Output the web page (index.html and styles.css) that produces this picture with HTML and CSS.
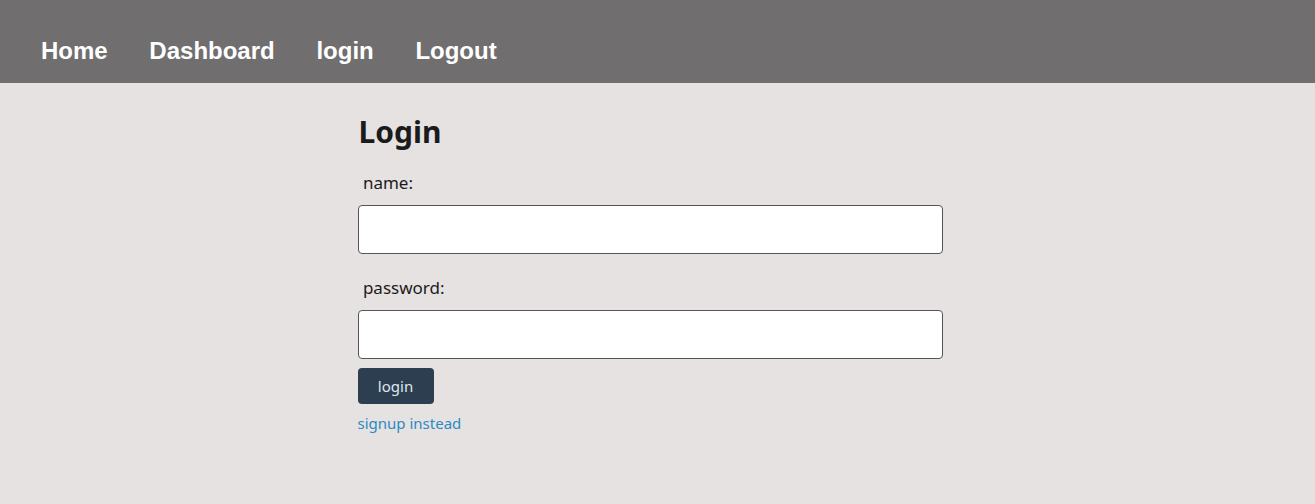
FILE: index.html
```html
<!DOCTYPE html>
<html>
<head>
<meta charset="utf-8">
<link rel="stylesheet" href="styles.css">
</head>
<body>
<nav class="nav">
  <a class="nav-link" href="#">Home</a>
  <a class="nav-link" href="#">Dashboard</a>
  <a class="nav-link" href="#">login</a>
  <a class="nav-link" href="#">Logout</a>
</nav>
<main class="main">
  <form class="form">
    <h1 class="title">Login</h1>
    <label class="label"> name:</label>
    <input class="input" type="text">
    <label class="label"> password:</label>
    <input class="input" type="password">
    <button class="btn" type="button">login</button>
    <a class="link" href="#">signup instead</a>
  </form>
</main>
</body>
</html>
```
FILE: styles.css
```css
html, body {
  margin: 0;
  padding: 0;
}
body {
  background: #e6e2e1;
  font-family: "Noto Sans", "Open Sans", sans-serif;
  color: #1b1b1b;
  height: 504px;
}
.nav {
  background: #706e6f;
  height: 83px;
  display: flex;
  align-items: center;
  padding: 19px 0 0 20px;
  box-sizing: border-box;
}
.nav-link {
  font-family: "Liberation Sans", Arial, sans-serif;
  font-weight: bold;
  font-size: 24px;
  color: #ffffff;
  text-decoration: none;
  padding: 0 21px;
}
.nav-link + .nav-link {
  margin-left: -0.33px;
}
.main {
  display: flex;
  justify-content: center;
}
.form {
  width: 600px;
  display: flex;
  flex-direction: column;
  align-items: flex-start;
  padding-top: 28px;
}
.title {
  font-size: 30px;
  font-weight: bold;
  margin: 0 0 0 1px;
  line-height: 41px;
}
.label {
  font-size: 17px;
  margin: 19px 0 0 1px;
  line-height: 24px;
  white-space: pre;
}
.input {
  width: 585px;
  height: 49px;
  box-sizing: border-box;
  border: 1px solid #555;
  border-radius: 4px;
  background: #fff;
  margin: 10px 0 0 0;
}
.input + .label {
  margin-top: 22px;
}
.btn {
  margin-top: 9px;
  width: 76px;
  height: 36px;
  background: #2c3e50;
  color: #dce9f2;
  border: none;
  border-radius: 4px;
  font-family: "Noto Sans", sans-serif;
  font-size: 15px;
}
.link {
  margin-top: 8px;
  color: #2c8ac6;
  text-decoration: none;
  font-size: 15px;
  line-height: 22px;
}
```
